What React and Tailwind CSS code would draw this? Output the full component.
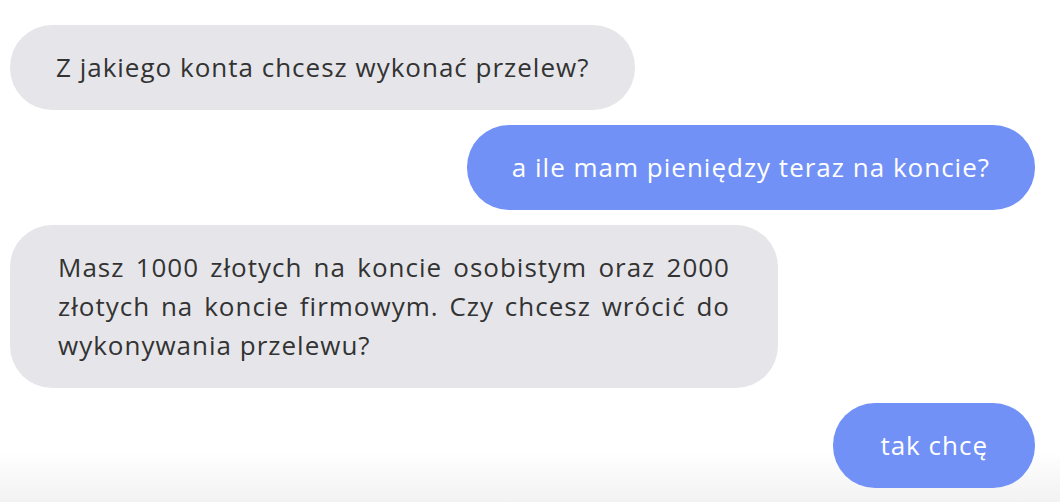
export default function App() {
  const font = { fontFamily: '"Open Sans", "Noto Sans", sans-serif' };
  return (
    <div
      className="w-[1060px] h-[502px] overflow-hidden bg-linear-to-b from-white from-[90%] to-[#f2f2f2] pt-[25px] pl-[10px] pr-[25px] flex flex-col gap-[15px]"
      style={font}
    >
      <div className="self-start rounded-[42px] bg-[#e6e6ea] px-[46px] py-[23px] text-[26px] tracking-[1px] leading-[39px] text-[#333]">
        Z jakiego konta chcesz wykonać przelew?
      </div>
      <div className="self-end rounded-[42px] bg-[#7191f6] px-[45px] py-[23px] text-[26px] tracking-[1px] leading-[39px] text-white">
        a ile mam pieniędzy teraz na koncie?
      </div>
      <div className="self-start w-[768px] rounded-[42px] bg-[#e6e6ea] px-[48px] py-[23px] text-[26px] tracking-[1px] leading-[39px] text-[#333] text-justify">
        Masz 1000 złotych na koncie osobistym oraz 2000 złotych na koncie firmowym. Czy chcesz wrócić do wykonywania przelewu?
      </div>
      <div className="self-end rounded-[42px] bg-[#7191f6] px-[47px] py-[23px] text-[26px] tracking-[1px] leading-[39px] text-white">
        tak chcę
      </div>
    </div>
  );
}
